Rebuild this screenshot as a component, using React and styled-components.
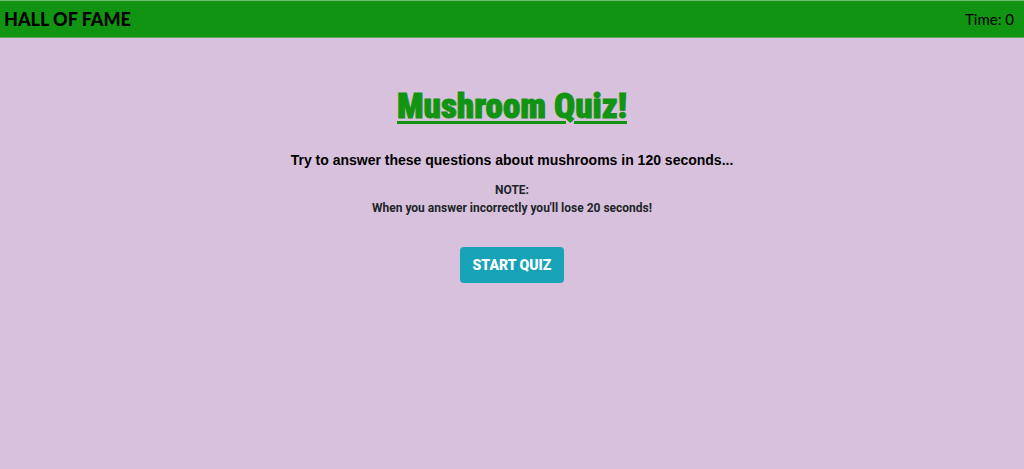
import React from "react";
import styled, { createGlobalStyle } from "styled-components";

const GlobalStyle = createGlobalStyle`
  *, *::before, *::after { box-sizing: border-box; }
  body {
    margin: 0;
    background: #d8c1dd;
    color: #212529;
    font-family: Roboto, "Liberation Sans", Arial, sans-serif;
  }
`;

const NavBar = styled.header`
  display: flex;
  align-items: center;
  justify-content: space-between;
  height: 38px;
  padding: 0 10px 0 4px;
  background: #119411;
  border-top: 1px solid #70bd70;
  border-bottom: 1px solid #62a562;
  color: #000;
`;

const FameLink = styled.a`
  color: inherit;
  font: 900 18px/24px Lato, sans-serif;
  text-decoration: none;
`;

const Timer = styled.span`
  font: 400 15px/24px Lato, sans-serif;
`;

const Intro = styled.main`
  display: flex;
  flex-direction: column;
  align-items: center;
  padding: 44px 16px;
  text-align: center;
`;

const Title = styled.h1`
  margin: 0;
  color: #119411;
  font: 900 35px/50px "Roboto Condensed", "Liberation Sans Narrow", sans-serif;
  text-decoration: underline;
  text-decoration-thickness: 3px;
  text-underline-offset: 3px;
  -webkit-text-stroke: 1px #119411;
`;

const Lead = styled.h2`
  margin: 16px 0 0;
  color: #000;
  font: 700 14px/24px "Liberation Sans", Arial, sans-serif;
`;

const Note = styled.p`
  margin: 9px 0 0;
  font-size: 12px;
  font-weight: 700;
  line-height: 18px;
`;

const StartButton = styled.button`
  margin-top: 30px;
  padding: 6px 12px;
  border: 1px solid #17a2b8;
  border-width: 0 1px;
  border-radius: 4px;
  background: #17a2b8;
  color: #fff;
  font: 900 14px/24px Roboto, "Liberation Sans", Arial, sans-serif;
  cursor: pointer;
`;

export default function App() {
  return (
    <>
      <GlobalStyle />
      <NavBar>
        <FameLink href="#hall-of-fame">HALL OF FAME</FameLink>
        <Timer>Time: 0</Timer>
      </NavBar>
      <Intro>
        <Title>Mushroom Quiz!</Title>
        <Lead>Try to answer these questions about mushrooms in 120 seconds...</Lead>
        <Note>
          NOTE:
          <br />
          When you answer incorrectly you'll lose 20 seconds!
        </Note>
        <StartButton type="button">START QUIZ</StartButton>
      </Intro>
    </>
  );
}
